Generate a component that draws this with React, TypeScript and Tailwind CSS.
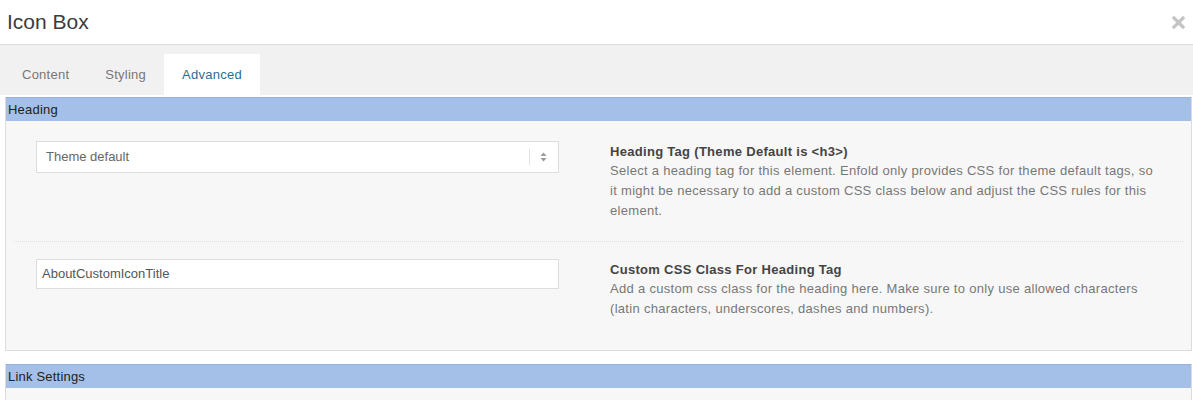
import { ReactNode } from "react";

const tabs = ["Content", "Styling", "Advanced"];

// Small up/down arrows drawn at the right end of the select
const SelectArrows = (): ReactNode => (
    <svg width="7" height="10" viewBox="0 0 7 10" className="text-[#999]">
        <path d="M3.5 0.5 L6.5 4 L0.5 4 Z" fill="currentColor" />
        <path d="M3.5 9.5 L6.5 6 L0.5 6 Z" fill="currentColor" />
    </svg>
);

const CloseIcon = (): ReactNode => (
    <svg width="13" height="13" viewBox="0 0 13 13">
        <path d="M2 2 L11 11 M11 2 L2 11" stroke="#c4c4c4" strokeWidth="3.2" strokeLinecap="square" />
    </svg>
);

const SectionBar = ({ title }: { title: string }): ReactNode => (
    <div className="h-[24px] bg-[#a4bfe8] border-t border-[#97b3dd] px-[2px] text-[13px] leading-[23px] tracking-[0.2px] text-[#222]">
        {title}
    </div>
);

const App = (): ReactNode => {
    return (
        <div className="w-full h-[400px] overflow-hidden bg-white font-['Liberation_Sans',Arial,sans-serif]">
            {/* Modal header */}
            <div className="h-[45px] border-b border-[#dcdcdc] flex items-center justify-between pl-[7px] pr-[8px]">
                <h1 className="text-[21px] font-light text-[#3c3c3c] -mt-[1px]">Icon Box</h1>
                <CloseIcon />
            </div>

            {/* Tabs */}
            <div className="h-[50px] bg-[#f1f1f1] flex items-end pl-[4px]">
                {tabs.map((tab) => (
                    <div
                        key={tab}
                        className={
                            tab === "Advanced"
                                ? "h-[41px] px-[18px] flex items-center bg-white text-[13px] tracking-[0.25px] text-[#2e6d8e]"
                                : "h-[41px] px-[18px] flex items-center text-[13px] tracking-[0.25px] text-[#777]"
                        }
                    >
                        {tab}
                    </div>
                ))}
            </div>

            {/* Heading section */}
            <div className="mt-[2px] ml-[5px] mr-[1px] border-x border-b border-[#dcdcdc] bg-[#f7f7f7]">
                <SectionBar title="Heading" />
                <div className="mx-[8px]">
                    {/* Heading tag row */}
                    <div className="flex gap-[51px] px-[22px] pt-[20px] pb-[20px] border-b border-dotted border-[#dedede]">
                        <div className="w-[523px] shrink-0 h-[32px] bg-white border border-[#dddddd] flex items-center justify-between pl-[9px] pr-[11px]">
                            <span className="text-[13px] text-[#666]">Theme default</span>
                            <div className="flex items-center gap-[10px]">
                                <div className="w-px h-[16px] bg-[#e2e2e2]" />
                                <SelectArrows />
                            </div>
                        </div>
                        <div className="flex-1 pt-[2px] tracking-[0.3px]">
                            <p className="text-[13px] leading-[18px] font-bold text-[#444]">
                                Heading Tag (Theme Default is &lt;h3&gt;)
                            </p>
                            <p className="text-[13px] leading-[20px] text-[#777]">
                                Select a heading tag for this element. Enfold only provides CSS for theme default tags, so it might be necessary to add a custom CSS class below and adjust the CSS rules for this element.
                            </p>
                        </div>
                    </div>

                    {/* Custom class row */}
                    <div className="flex gap-[51px] px-[22px] pt-[17px] pb-[31px]">
                        <div className="w-[523px] shrink-0 h-[30px] bg-white border border-[#dddddd] flex items-center pl-[5px]">
                            <span className="text-[13px] text-[#555]">AboutCustomIconTitle</span>
                        </div>
                        <div className="flex-1 pt-[2px] tracking-[0.3px]">
                            <p className="text-[13px] leading-[18px] font-bold text-[#444]">
                                Custom CSS Class For Heading Tag
                            </p>
                            <p className="text-[13px] leading-[20px] text-[#777]">
                                Add a custom css class for the heading here. Make sure to only use allowed characters (latin characters, underscores, dashes and numbers).
                            </p>
                        </div>
                    </div>
                </div>
            </div>

            {/* Link settings section */}
            <div className="mt-[13px] ml-[5px] mr-[1px] border-x border-[#dcdcdc] bg-[#f7f7f7] h-[60px]">
                <SectionBar title="Link Settings" />
            </div>
        </div>
    );
};

export default App;
